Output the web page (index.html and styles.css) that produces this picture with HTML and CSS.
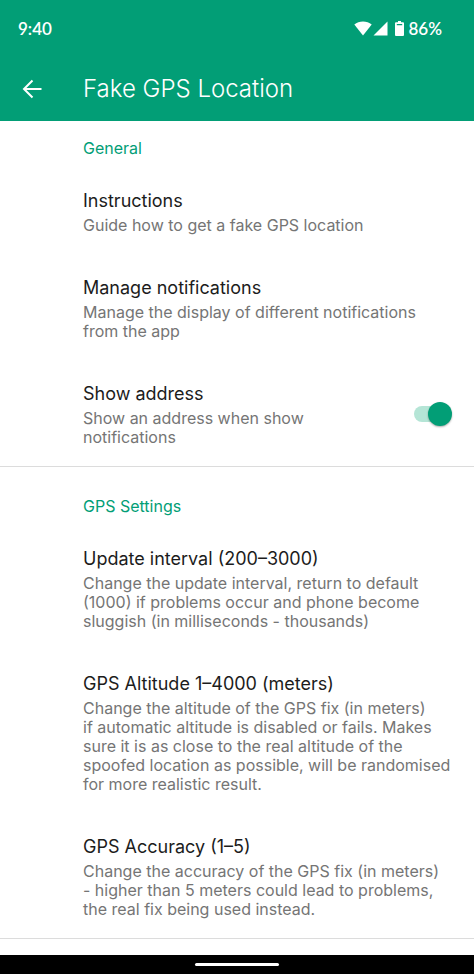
FILE: index.html
```html
<!DOCTYPE html>
<html lang="en">
<head>
<meta charset="utf-8">
<meta name="viewport" content="width=device-width, initial-scale=1">
<title>Fake GPS Location</title>
<link rel="stylesheet" href="styles.css">
</head>
<body>
<header class="top">
  <div class="status">
    <span class="clock">9:40</span>
    <div class="indicators">
      <svg class="wifi" viewBox="0 0 18 15" width="18" height="15" aria-hidden="true"><path d="M9 14.500.300 3.500C5-.400 13-.400 17.700 3.500Z"/></svg>
      <svg class="signal" viewBox="0 0 15 15" width="15" height="15" aria-hidden="true"><path d="M14.500.500v14H.500Z"/></svg>
      <svg class="battery" viewBox="0 0 9 15" width="9" height="15" aria-hidden="true"><path fill-rule="evenodd" d="M3 0h3v1.300h2a1 1 0 0 1 1 1V14a1 1 0 0 1-1 1H1a1 1 0 0 1-1-1V2.300a1 1 0 0 1 1-1h2ZM1.800 3v1.300h5.400V3Z"/></svg>
      <span class="percent">86%</span>
    </div>
  </div>
  <div class="bar">
    <button class="back" type="button" aria-label="Back">
      <svg viewBox="0 0 20 20" width="20" height="20" aria-hidden="true"><path d="M19.500 10H2.500M10.500 1.500 2 10l8.500 8.500" /></svg>
    </button>
    <h1 class="title">Fake GPS Location</h1>
  </div>
</header>
<main class="settings">
  <section class="group">
    <h2 class="heading">General</h2>
    <div class="item">
      <h3 class="name">Instructions</h3>
      <p class="summary">Guide how to get a fake GPS location</p>
    </div>
    <div class="item">
      <h3 class="name">Manage notifications</h3>
      <p class="summary">Manage the display of different notifications from the app</p>
    </div>
    <label class="item toggle">
      <span class="text">
        <span class="name">Show address</span>
        <span class="summary">Show an address when show notifications</span>
      </span>
      <input class="switch" type="checkbox" role="switch" checked>
    </label>
  </section>
  <section class="group">
    <h2 class="heading">GPS Settings</h2>
    <div class="item">
      <h3 class="name">Update interval (200–3000)</h3>
      <p class="summary">Change the update interval, return to default (1000) if problems occur and phone become sluggish (in milliseconds - thousands)</p>
    </div>
    <div class="item">
      <h3 class="name">GPS Altitude 1–4000 (meters)</h3>
      <p class="summary">Change the altitude of the GPS fix (in meters)<br>if automatic altitude is disabled or fails. Makes sure it is as close to the real altitude of the spoofed location as possible, will be randomised for more realistic result.</p>
    </div>
    <div class="item">
      <h3 class="name">GPS Accuracy (1–5)</h3>
      <p class="summary">Change the accuracy of the GPS fix (in meters)<br>- higher than 5 meters could lead to problems, the real fix being used instead.</p>
    </div>
  </section>
</main>
<footer class="nav"><span class="handle"></span></footer>
</body>
</html>
```

FILE: styles.css
```css
* { box-sizing: border-box; }

body {
  margin: 0;
  min-height: 100vh;
  display: flex;
  flex-direction: column;
  background: #fff;
  color: #1c1c1c;
  font-family: Inter, "Liberation Sans", sans-serif;
}

h1, h2, h3, p { margin: 0; font-weight: 400; }

.top { background: #029e76; color: #fff; }

.status {
  display: flex;
  justify-content: space-between;
  align-items: center;
  height: 56px;
  padding: 0 32px 0 18px;
  font-family: Lato, sans-serif;
  font-size: 17px;
  font-weight: 600;
}

.indicators { display: flex; align-items: center; gap: 4px; }
.indicators svg { fill: #fff; }
.wifi { margin-right: -3px; }
.signal { margin-right: 3px; }

.bar { display: flex; align-items: center; height: 65px; padding-left: 22px; }

.back {
  display: flex;
  width: 61px;
  padding: 0;
  border: 0;
  background: none;
}

.back path { fill: none; stroke: #fff; stroke-width: 2; }

.title { font-size: 24px; font-weight: 300; line-height: 32px; }

.settings { flex: 1; }

.group { padding: 17px 20px 19px 83px; border-bottom: 1px solid #dcdcdc; }
.group + .group { padding-top: 29px; }

.heading { color: #029e76; font-size: 16px; line-height: 20px; margin-bottom: 31px; }

.item { display: block; }
.item + .item { margin-top: 41px; }

.name { display: block; font-size: 18px; line-height: 24px; margin-bottom: 3px; }
.summary { display: block; color: #757575; font-size: 16px; line-height: 19px; }

.toggle { display: flex; align-items: center; justify-content: space-between; }
.text { width: 240px; }

.switch {
  appearance: none;
  position: relative;
  width: 38px;
  height: 24px;
  margin: 0 2px 2px 0;
}

.switch::before {
  content: "";
  position: absolute;
  inset: 4px 4px 4px 0;
  border-radius: 8px;
  background: #b5e5d6;
}

.switch::after {
  content: "";
  position: absolute;
  top: 0;
  right: 0;
  width: 24px;
  height: 24px;
  border-radius: 50%;
  background: #029e76;
  box-shadow: 0 1px 2px #0005;
}

.nav { display: flex; justify-content: center; align-items: center; height: 19px; background: #000; }
.handle { width: 84px; height: 3px; border-radius: 2px; background: #fff; }
```
